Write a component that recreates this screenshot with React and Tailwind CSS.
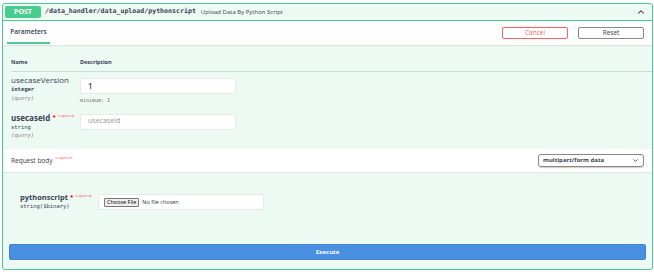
import { ChevronUp, ChevronDown } from 'lucide-react'

const sans = { fontFamily: '"Open Sans", "Noto Sans", sans-serif' }
const mono = { fontFamily: '"DejaVu Sans Mono", "Liberation Mono", monospace' }

export default function App() {
  return (
    <div className="w-[654px] h-[276px] bg-white overflow-hidden pt-[3px] pl-[2px]" style={sans}>
      <div className="w-[651px] h-[267px] border border-[#49cc90] rounded-[3px] bg-[#edf9f3] flex flex-col overflow-hidden">
        {/* summary */}
        <div className="h-[17px] flex items-center border-b border-[#49cc90] pl-[2px] pr-[6px] shrink-0">
          <span className="w-[36px] h-[12px] bg-[#49cc90] rounded-[2px] text-white text-[7px] font-bold flex items-center justify-center">POST</span>
          <span className="ml-[4px] text-[6.6px] font-bold text-[#3b4151]" style={mono}>/data_handler/data_upload/pythonscript</span>
          <span className="ml-[5px] text-[6px] text-[#3b4151]">Upload Data By Python Script</span>
          <ChevronUp className="ml-auto w-[10px] h-[10px] text-[#333]" strokeWidth={2.5} />
        </div>

        {/* parameters bar */}
        <div className="h-[24px] bg-white flex items-stretch shadow-[0_1px_1px_rgba(0,0,0,0.08)] shrink-0 pr-[8px]">
          <div className="ml-[4px] w-[43px] flex flex-col">
            <div className="flex-1 flex items-center justify-center text-[6.5px] font-semibold text-[#3b4151]">Parameters</div>
            <div className="h-[2px] bg-[#49cc90] mb-[1px]"></div>
          </div>
          <div className="ml-auto flex items-center gap-[10px]">
            <button className="w-[66px] h-[12px] border border-[#ff6060] rounded-[2px] text-[6.5px] text-[#ff6060] flex items-center justify-center">Cancel</button>
            <button className="w-[66px] h-[12px] border border-[#888] rounded-[2px] text-[6.5px] text-[#3b4151] flex items-center justify-center">Reset</button>
          </div>
        </div>

        {/* table */}
        <div className="h-[104px] shrink-0 pt-[11px]">
          <div className="flex items-center h-[12px] text-[5.5px] font-bold text-[#3b4151] pl-[8px]">
            <span className="w-[69px]">Name</span>
            <span>Description</span>
          </div>
          <div className="ml-[8px] h-px bg-[#c9dcd3] mt-[3px]"></div>
          <div className="flex pl-[8px] pt-[4px]">
            <div className="w-[69px] leading-none">
              <div className="text-[8px] text-[#3b4151]">usecaseVersion</div>
              <div className="text-[5.5px] font-bold text-[#3b4151] mt-[3px]" style={mono}>integer</div>
              <div className="text-[5.5px] italic text-[#888] mt-[3px]" style={mono}>(query)</div>
            </div>
            <div className="pt-[2px]">
              <div className="w-[156px] h-[16px] bg-white border border-[#e4ece8] rounded-[3px] flex items-center pl-[7px] text-[8px] font-semibold text-[#3b4151]">1</div>
              <div className="text-[5px] text-[#666] mt-[3px]" style={mono}>minimum: 1</div>
            </div>
          </div>
          <div className="flex pl-[8px] pt-[9px]">
            <div className="w-[69px] leading-none">
              <div className="text-[8px] font-bold text-[#3b4151] whitespace-nowrap">usecaseId <span className="text-[#ff0000] text-[6px] align-top">*</span> <span className="text-[#ff5050] text-[4px] align-top font-normal">required</span></div>
              <div className="text-[5.5px] text-[#3b4151] mt-[3px]" style={mono}>string</div>
              <div className="text-[5.5px] italic text-[#888] mt-[3px]" style={mono}>(query)</div>
            </div>
            <div className="w-[156px] h-[16px] bg-white border border-[#e4ece8] rounded-[3px] flex items-center pl-[7px] text-[7px] text-[#999]">usecaseId</div>
          </div>
        </div>

        {/* request body bar */}
        <div className="h-[23px] bg-white flex items-center pl-[8px] pr-[8px] shrink-0 shadow-[0_1px_1px_rgba(0,0,0,0.06)]">
          <span className="text-[6.5px] text-[#3b4151]">Request body</span>
          <span className="ml-[3px] text-[4px] text-[#ff5050] self-start mt-[6px]">required</span>
          <div className="ml-auto w-[106px] h-[13px] border border-[#888] rounded-[3px] shadow-[0_1px_1px_rgba(0,0,0,0.2)] flex items-center pl-[4px] pr-[4px] text-[6px] font-bold text-[#3b4151]">
            <span>multipart/form data</span>
            <ChevronDown className="ml-auto w-[7px] h-[7px]" strokeWidth={3} />
          </div>
        </div>

        {/* file param */}
        <div className="h-[65px] shrink-0 flex pl-[17px] pt-[22px]">
          <div className="w-[78px] leading-none">
            <div className="text-[7.5px] font-bold text-[#3b4151] whitespace-nowrap">pythonscript <span className="text-[#ff0000] text-[6px] align-top">*</span> <span className="text-[#ff5050] text-[4px] align-top font-normal">required</span></div>
            <div className="text-[5.5px] text-[#3b4151] mt-[2px]" style={mono}>string($binary)</div>
          </div>
          <div className="w-[166px] h-[16px] bg-white border border-[#e4ece8] rounded-[2px] flex items-center pl-[5px]">
            <span className="h-[9px] px-[2px] border border-[#767676] bg-[#efefef] rounded-[1px] text-[5.5px] text-black flex items-center">Choose File</span>
            <span className="ml-[3px] text-[5.5px] text-[#333]">No file chosen</span>
          </div>
        </div>

        {/* execute */}
        <div className="px-[6px] pt-[7px]">
          <button className="w-full h-[16px] bg-[#4990e2] rounded-[2px] border border-[#4383d0] text-white text-[6px] font-bold flex items-center justify-center">Execute</button>
        </div>
      </div>
    </div>
  )
}
